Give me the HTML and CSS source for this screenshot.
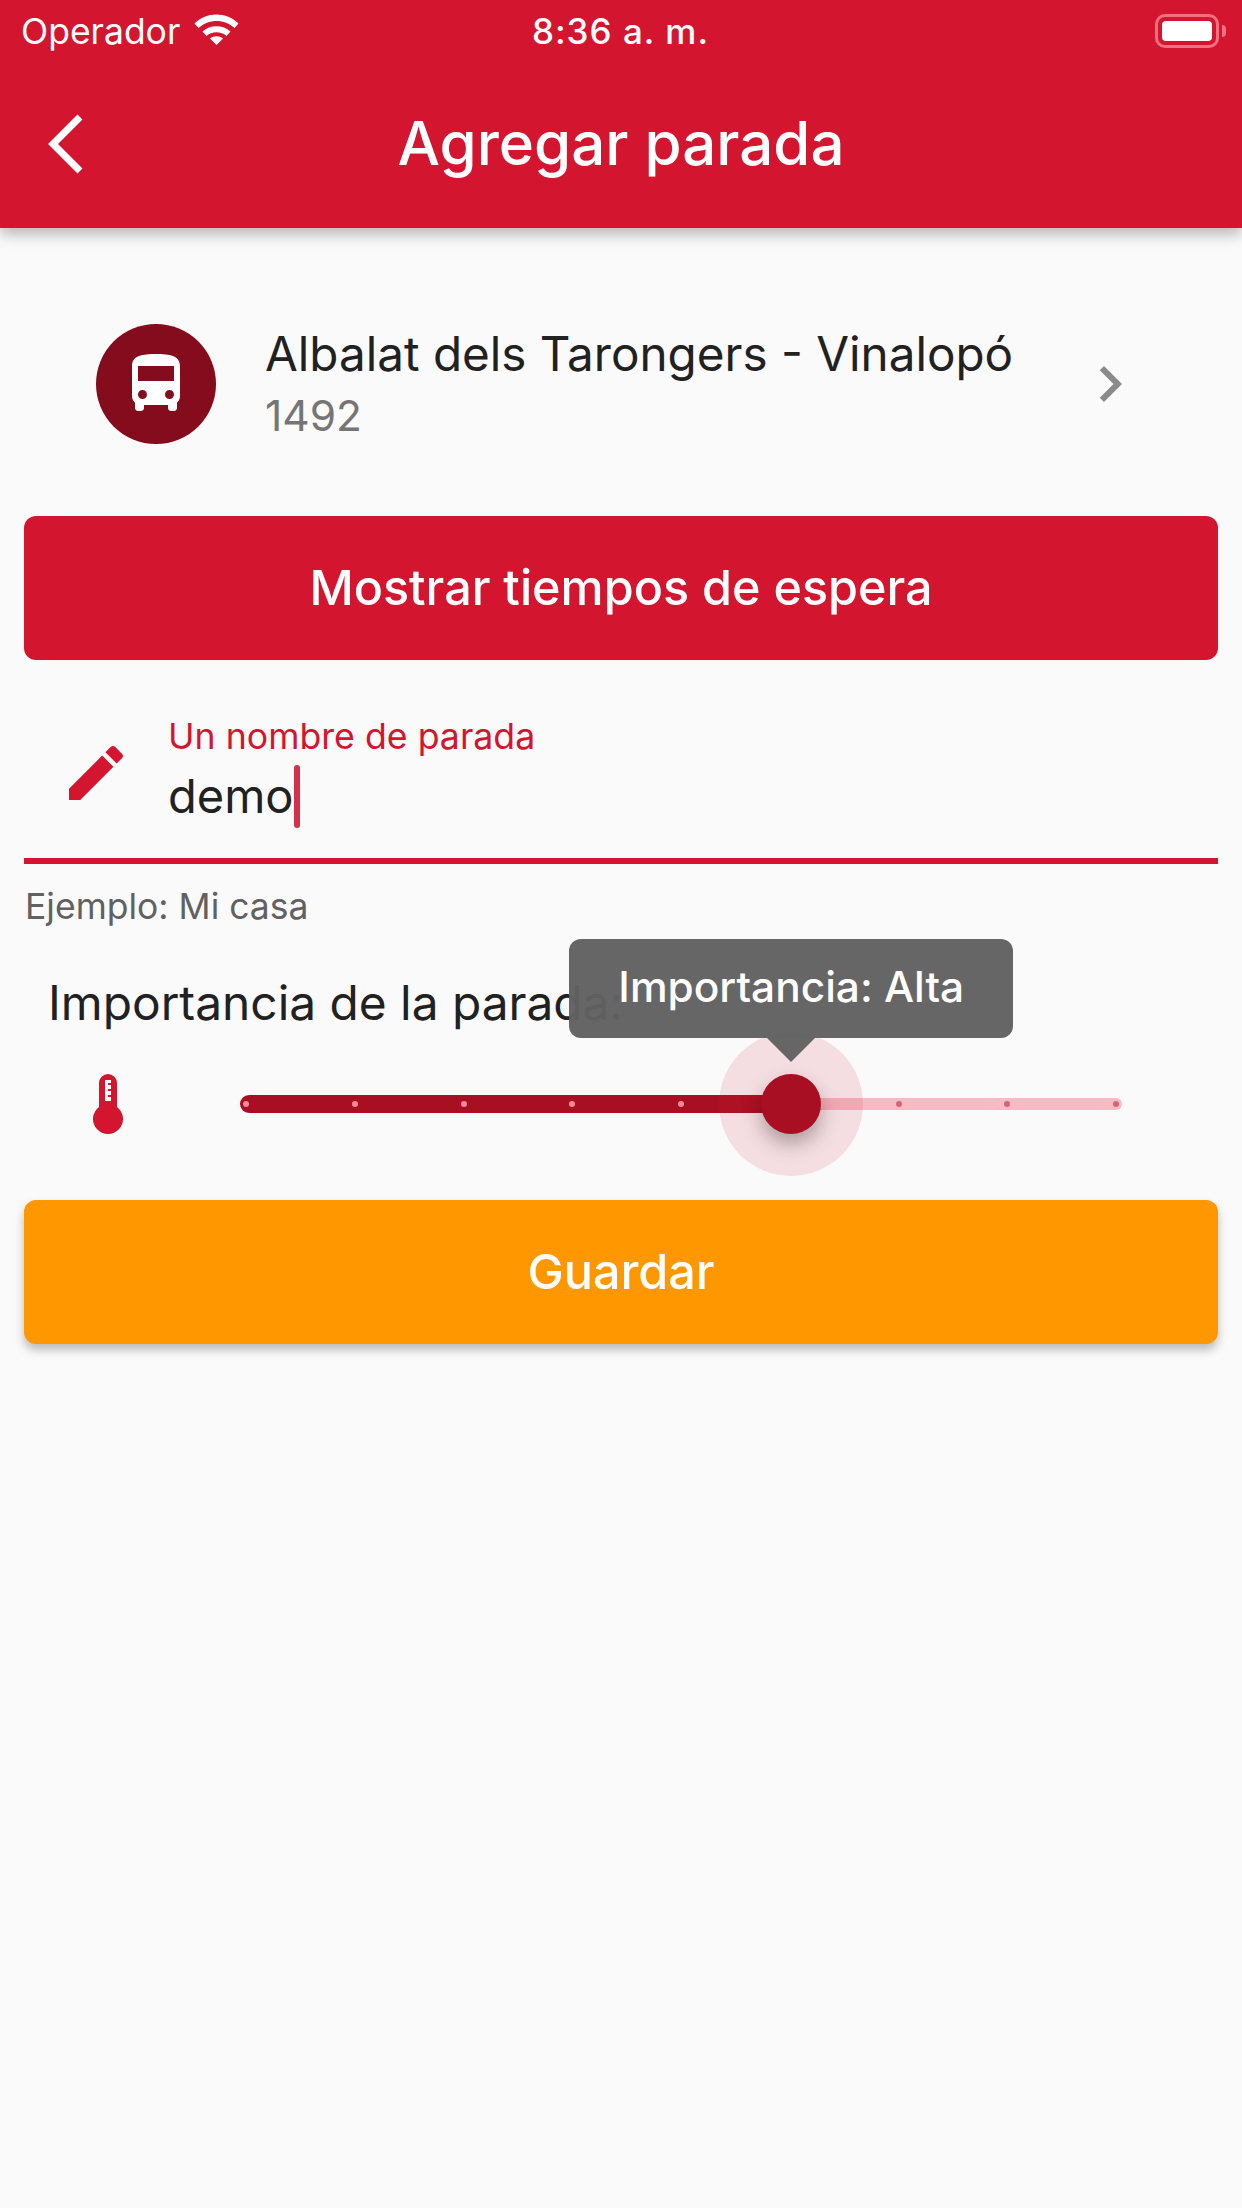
FILE: index.html
```html
<!DOCTYPE html>
<html lang="es">
<head>
    <meta charset="UTF-8">
    <meta name="viewport" content="width=device-width, initial-scale=1.0">
    <title>Agregar parada</title>
    <link rel="stylesheet" href="styles.css">
</head>
<body>

    <header class="appbar">
        <div class="statusbar">
            <div class="status-left">
                <span>Operador</span>
                <svg class="wifi" viewBox="0 0 45 32">
                    <path d="M0.5 10.5C12.5 -1.5 32.5 -1.5 44.5 10.5L40.5 15C30.5 5.5 14.5 5.5 4.5 15Z" fill="#fff"/>
                    <path d="M8.5 18.5C16 11.5 29 11.5 36.5 18.5L32.5 23C27 18 18 18 12.5 23Z" fill="#fff"/>
                    <path d="M16 25.5C19.5 22.5 25.5 22.5 29 25.5L22.5 32Z" fill="#fff"/>
                </svg>
            </div>
            <span class="status-time">8:36 a. m.</span>
            <div class="status-right">
                <div class="battery"><div class="battery-fill"></div></div>
                <div class="battery-nub"></div>
            </div>
        </div>
        <div class="toolbar">
            <svg class="back" viewBox="0 0 36 60"><path d="M32 3L5 30L32 57" fill="none" stroke="#fff" stroke-width="7"/></svg>
            <h1>Agregar parada</h1>
        </div>
    </header>

    <main>
        <div class="stop">
            <div class="avatar">
                <svg class="icon" viewBox="0 0 24 24"><path d="M4 16c0 .88.39 1.67 1 2.22V20c0 .55.45 1 1 1h1c.55 0 1-.45 1-1v-1h8v1c0 .55.45 1 1 1h1c.55 0 1-.45 1-1v-1.78c.61-.55 1-1.34 1-2.22V6c0-3.5-3.58-4-8-4s-8 .5-8 4v10zm3.5 1c-.83 0-1.5-.67-1.5-1.5S6.67 14 7.5 14s1.5.67 1.5 1.5S8.33 17 7.5 17zm9 0c-.83 0-1.5-.67-1.5-1.5s.67-1.5 1.5-1.5 1.5.67 1.5 1.5-.67 1.5-1.5 1.5zm1.5-6H6V6h12v5z" fill="#fff"/></svg>
            </div>
            <div class="stop-text">
                <div class="stop-name">Albalat dels Tarongers - Vinalopó</div>
                <div class="stop-code">1492</div>
            </div>
            <svg class="icon" viewBox="0 0 24 24"><path d="M10 6L8.59 7.41 13.17 12l-4.58 4.59L10 18l6-6z" fill="#8a8a8a"/></svg>
        </div>

        <button class="btn btn-red" type="button">Mostrar tiempos de espera</button>

        <div class="field">
            <svg class="icon field-icon" viewBox="0 0 24 24"><path d="M3 17.25V21h3.75L17.81 9.94l-3.75-3.75L3 17.25zM20.71 7.04c.39-.39.39-1.02 0-1.41l-2.34-2.34c-.39-.39-1.02-.39-1.41 0l-1.83 1.83 3.75 3.75 1.83-1.83z" fill="#d4152f"/></svg>
            <div class="field-text">
                <label class="field-label">Un nombre de parada</label>
                <div class="field-value">demo<span class="caret"></span></div>
            </div>
        </div>
        <div class="helper">Ejemplo: Mi casa</div>

        <div class="importance-label">Importancia de la parada:</div>

        <div class="importance-row">
            <svg class="thermo" viewBox="0 0 30 60">
                <path d="M6 9a9 9 0 0 1 18 0V33a15 15 0 1 1-18 0Z" fill="#d4152f"/>
                <path d="M12 6H18V9H15V11H18V15H15V17H18V21H15V23H18V27H12Z" fill="#fff"/>
            </svg>
            <div class="slider">
                <div class="track-on" style="width: 62.5%"></div>
                <div class="track-off"></div>
                <div class="ticks">
                    <i class="tick"></i><i class="tick"></i><i class="tick"></i><i class="tick"></i><i class="tick"></i>
                    <i class="tick tick-hidden"></i>
                    <i class="tick tick-off"></i><i class="tick tick-off"></i><i class="tick tick-off"></i>
                </div>
                <div class="thumb" style="left: 62.5%">
                    <div class="thumb-halo"></div>
                    <div class="thumb-dot"></div>
                    <div class="tooltip">Importancia: Alta</div>
                </div>
            </div>
        </div>

        <button class="btn btn-orange" type="button">Guardar</button>
    </main>

</body>
</html>
```

FILE: styles.css
```css
* {
    box-sizing: border-box;
}
body {
    margin: 0;
    min-height: 2208px;
    background: #fafafa;
    color: #212121;
    font-family: Inter, "Noto Sans", sans-serif;
}

/* App bar */
.appbar {
    height: 228px;
    background: #d4152f;
    color: white;
    box-shadow: 0 6px 14px rgba(0, 0, 0, 0.28);
}
.statusbar {
    display: flex;
    align-items: center;
    height: 62px;
    padding: 0 16px 0 21px;
    font-size: 35.5px;
}
.status-left {
    flex: 1;
    display: flex;
    align-items: center;
    gap: 14px;
}
.wifi {
    width: 45px;
    height: 32px;
    margin-top: -4px;
}
.status-time {
    margin-right: 6px;
    font-size: 35px;
    font-weight: 500;
    letter-spacing: 1px;
}
.status-right {
    flex: 1;
    display: flex;
    justify-content: flex-end;
    align-items: center;
}
.battery {
    width: 64px;
    height: 34px;
    padding: 4px;
    border: 3px solid #f2707f;
    border-radius: 10px;
}
.battery-fill {
    height: 100%;
    background: white;
    border-radius: 4px;
}
.battery-nub {
    width: 4px;
    height: 12px;
    margin-left: 3px;
    background: #f2707f;
    border-radius: 0 6px 6px 0;
}
.toolbar {
    display: flex;
    align-items: center;
    justify-content: center;
    position: relative;
    height: 162px;
}
.toolbar h1 {
    margin: 0;
    font-size: 60px;
    font-weight: 500;
}
.back {
    position: absolute;
    left: 48px;
    top: 52px;
    width: 36px;
    height: 60px;
}

.icon {
    flex: none;
    width: 72px;
    height: 72px;
}

/* Stop tile */
.stop {
    display: flex;
    align-items: center;
    height: 120px;
    margin-top: 96px;
    padding: 0 96px;
}
.avatar {
    flex: none;
    display: flex;
    align-items: center;
    justify-content: center;
    width: 120px;
    height: 120px;
    border-radius: 50%;
    background: #850c1c;
}
.stop-text {
    flex: 1;
    margin-left: 49px;
}
.stop-name {
    font-size: 47.6px;
    line-height: 60px;
}
.stop-code {
    margin-top: 3px;
    font-size: 42.5px;
    line-height: 58px;
    color: #757575;
}

/* Buttons */
.btn {
    display: block;
    width: 1194px;
    height: 144px;
    margin: 0 24px;
    padding: 0 0 2px;
    border: none;
    border-radius: 12px;
    color: white;
    font-family: inherit;
    font-size: 48.5px;
    font-weight: 500;
}
.btn-red {
    margin-top: 72px;
    background: #d4152f;
}
.btn-orange {
    margin-top: 66px;
    background: #ff9800;
    box-shadow: 0 6px 10px rgba(0, 0, 0, 0.25);
}

/* Name field */
.field {
    display: flex;
    align-items: flex-start;
    height: 204px;
    margin: 0 24px;
    padding-left: 36px;
    border-bottom: 6px solid #d4152f;
}
.field-icon {
    margin-top: 77px;
}
.field-text {
    margin: 52px 0 0 36px;
}
.field-label {
    display: block;
    font-size: 35.7px;
    line-height: 48px;
    color: #d4152f;
}
.field-value {
    display: flex;
    align-items: center;
    margin-top: 3px;
    font-size: 47px;
    line-height: 66px;
}
.caret {
    width: 6px;
    height: 63px;
    border-radius: 3px;
    background: #d4304a;
}
.helper {
    margin: 19px 0 0 25px;
    font-size: 35.5px;
    line-height: 48px;
    color: #616161;
}

/* Importance slider */
.importance-label {
    margin: 42px 0 0 48px;
    font-size: 47.8px;
    line-height: 60px;
}
.importance-row {
    display: flex;
    align-items: center;
    height: 60px;
    margin-top: 41px;
    padding: 0 120px 0 93px;
}
.thermo {
    flex: none;
    width: 30px;
    height: 60px;
}
.slider {
    flex: 1;
    display: flex;
    align-items: center;
    position: relative;
    height: 18px;
    margin-left: 117px;
}
.track-on {
    flex: none;
    height: 18px;
    background: #a90f23;
    border-radius: 9px 0 0 9px;
}
.track-off {
    flex: 1;
    height: 12px;
    background: #f6bcc4;
    border-radius: 0 6px 6px 0;
}
.ticks {
    position: absolute;
    left: 3px;
    right: 3px;
    top: 6px;
    display: flex;
    justify-content: space-between;
}
.tick {
    width: 6px;
    height: 6px;
    border-radius: 50%;
    background: #f08a98;
}
.tick-off {
    background: #d8647c;
}
.tick-hidden {
    visibility: hidden;
}
.thumb {
    position: absolute;
    top: 9px;
    width: 0;
    height: 0;
}
.thumb-halo {
    position: absolute;
    left: -72px;
    top: -72px;
    width: 144px;
    height: 144px;
    border-radius: 50%;
    background: rgba(212, 21, 47, 0.12);
}
.thumb-dot {
    position: absolute;
    left: -30px;
    top: -30px;
    width: 60px;
    height: 60px;
    border-radius: 50%;
    background: #a90f23;
    box-shadow: 0 10px 20px rgba(0, 0, 0, 0.3);
}
.tooltip {
    position: absolute;
    left: -222px;
    top: -165px;
    width: 444px;
    height: 99px;
    border-radius: 12px;
    background: rgba(97, 97, 97, 0.97);
    color: white;
    font-size: 42.4px;
    font-weight: 500;
    line-height: 96px;
    text-align: center;
}
.tooltip::after {
    content: "";
    position: absolute;
    left: 198px;
    top: 99px;
    border-left: 24px solid transparent;
    border-right: 24px solid transparent;
    border-top: 24px solid #666;
}
```
